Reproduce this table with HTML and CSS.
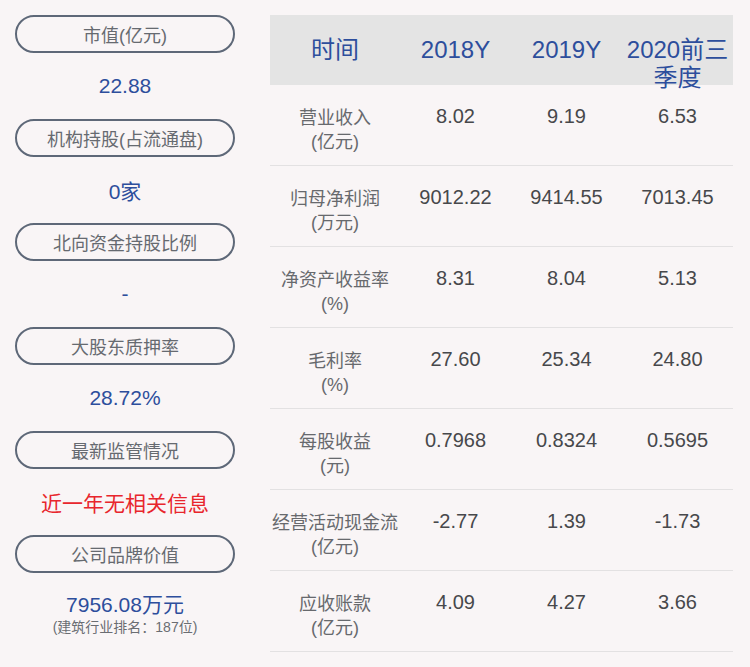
FILE: index.html
```html
<!DOCTYPE html>
<html>
<head>
<meta charset="utf-8">
<link rel="stylesheet" href="styles.css">
</head>
<body>
<div class="page">
  <div class="side">
    <div class="block"><div class="pill">市值(亿元)</div><div class="val">22.88</div></div>
    <div class="block"><div class="pill">机构持股(占流通盘)</div><div class="val">0家</div></div>
    <div class="block"><div class="pill">北向资金持股比例</div><div class="val">-</div></div>
    <div class="block"><div class="pill">大股东质押率</div><div class="val">28.72%</div></div>
    <div class="block"><div class="pill">最新监管情况</div><div class="val red">近一年无相关信息</div></div>
    <div class="block"><div class="pill">公司品牌价值</div><div class="val last"><div>7956.08万元</div><div class="sub">(建筑行业排名：187位)</div></div></div>
  </div>
  <div class="table">
    <div class="head">
      <div>时间</div><div>2018Y</div><div>2019Y</div><div>2020前三季度</div>
    </div>
    <div class="row"><div class="lbl">营业收入<br>(亿元)</div><div>8.02</div><div>9.19</div><div>6.53</div></div>
    <div class="row"><div class="lbl">归母净利润<br>(万元)</div><div>9012.22</div><div>9414.55</div><div>7013.45</div></div>
    <div class="row"><div class="lbl">净资产收益率<br>(%)</div><div>8.31</div><div>8.04</div><div>5.13</div></div>
    <div class="row"><div class="lbl">毛利率<br>(%)</div><div>27.60</div><div>25.34</div><div>24.80</div></div>
    <div class="row"><div class="lbl">每股收益<br>(元)</div><div>0.7968</div><div>0.8324</div><div>0.5695</div></div>
    <div class="row"><div class="lbl">经营活动现金流<br>(亿元)</div><div>-2.77</div><div>1.39</div><div>-1.73</div></div>
    <div class="row"><div class="lbl">应收账款<br>(亿元)</div><div>4.09</div><div>4.27</div><div>3.66</div></div>
  </div>
</div>
</body>
</html>
```

FILE: styles.css
```css
html, body {
  margin: 0;
  padding: 0;
  background: #f9f5f6;
  font-family: "Liberation Sans", "Noto Sans CJK SC", sans-serif;
}
.page {
  display: flex;
  padding: 15px 17px 0 15px;
  gap: 35px;
  width: 750px;
  height: 667px;
  box-sizing: border-box;
  overflow: hidden;
}
.side {
  width: 220px;
  display: flex;
  flex-direction: column;
}
.block {
  height: 104px;
  display: flex;
  flex-direction: column;
}
.pill {
  height: 38px;
  box-sizing: border-box;
  border: 2px solid #5e6878;
  border-radius: 19px;
  display: flex;
  align-items: center;
  justify-content: center;
  font-size: 18px;
  color: #666a70;
}
.val {
  height: 66px;
  display: flex;
  align-items: center;
  justify-content: center;
  font-size: 21px;
  color: #2d4e9c;
}
.val.red {
  color: #e8262d;
}
.val.last {
  flex-direction: column;
  justify-content: flex-start;
  padding-top: 20px;
  box-sizing: border-box;
  line-height: 24px;
}
.sub {
  font-size: 14px;
  color: #6a6d72;
  line-height: 20px;
}
.table {
  width: 463px;
  display: flex;
  flex-direction: column;
}
.head {
  display: grid;
  grid-template-columns: 130px repeat(3, 111px);
  height: 70px;
  background: #e4e4e4;
  align-items: start;
  text-align: center;
  font-size: 24px;
  line-height: 28px;
  color: #2d4e9c;
}
.head > div {
  padding-top: 21px;
}
.row {
  display: grid;
  grid-template-columns: 130px repeat(3, 111px);
  height: 81px;
  box-sizing: border-box;
  border-bottom: 1px solid #e3e1e2;
  align-items: start;
  text-align: center;
  font-size: 20px;
  line-height: 24px;
  color: #47484b;
}
.row > div {
  padding-top: 19px;
}
.row .lbl {
  padding-top: 21px;
  font-size: 18px;
  color: #67696d;
}
```
